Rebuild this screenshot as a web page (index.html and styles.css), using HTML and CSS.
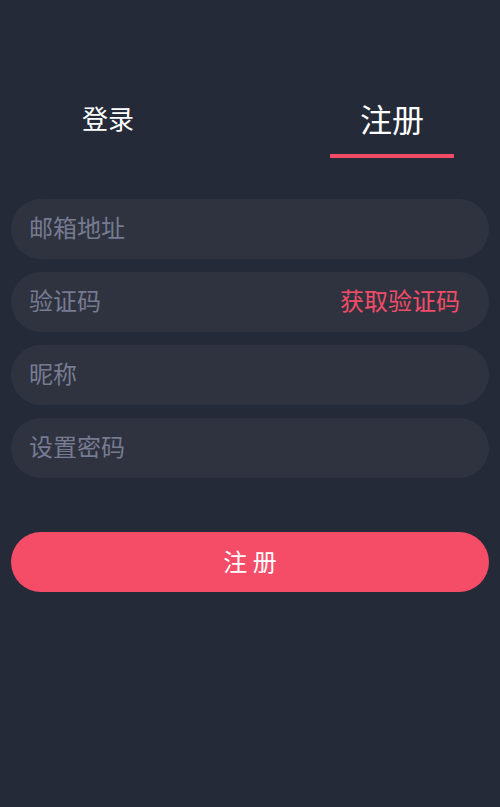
FILE: index.html
```html
<!DOCTYPE html>
<html lang="zh-CN">
<head>
<meta charset="utf-8">
<title>注册</title>
<link rel="stylesheet" href="styles.css">
</head>
<body>
<div class="page">
  <div class="tabs">
    <div class="tab">
      <span class="tab-label">登录</span>
      <span class="tab-line"></span>
    </div>
    <div class="tab tab-active">
      <span class="tab-label">注册</span>
      <span class="tab-line"></span>
    </div>
  </div>
  <form class="form">
    <div class="field"><span class="placeholder">邮箱地址</span></div>
    <div class="field"><span class="placeholder">验证码</span><span class="code-link">获取验证码</span></div>
    <div class="field"><span class="placeholder">昵称</span></div>
    <div class="field"><span class="placeholder">设置密码</span></div>
    <div class="submit">注 册</div>
  </form>
</div>
</body>
</html>
```
FILE: styles.css
```css
*, *::before, *::after {
  box-sizing: border-box;
}
html, body {
  margin: 0;
  padding: 0;
  background: #252a38;
  height: 100%;
}
body {
  font-family: "Noto Sans CJK SC", "Noto Sans", sans-serif;
  color: #ffffff;
}
.page {
  padding: 100px 11px 0;
}
.tabs {
  display: flex;
  justify-content: space-between;
  padding: 0 35px;
}
.tab {
  width: 124px;
  display: flex;
  flex-direction: column;
  align-items: center;
}
.tab-label {
  display: block;
  height: 36px;
  line-height: 36px;
  font-size: 26px;
  color: #ffffff;
}
.tab-active .tab-label {
  font-size: 32px;
}
.tab-line {
  display: block;
  width: 124px;
  height: 4px;
  margin-top: 18px;
  background: transparent;
}
.tab-active .tab-line {
  background: #f24b66;
}
.form {
  margin-top: 41px;
  display: flex;
  flex-direction: column;
  gap: 13px;
}
.field {
  height: 60px;
  border-radius: 30px;
  background: #2f3340;
  display: flex;
  align-items: center;
  justify-content: space-between;
  padding: 0 29px 6px 18px;
  font-size: 24px;
}
.placeholder {
  color: #767b91;
}
.code-link {
  color: #f34c67;
}
.submit {
  margin-top: 41px;
  height: 60px;
  border-radius: 30px;
  background: #f54c67;
  color: #ffffff;
  font-size: 24px;
  display: flex;
  align-items: center;
  justify-content: center;
  padding-bottom: 4px;
}
```
